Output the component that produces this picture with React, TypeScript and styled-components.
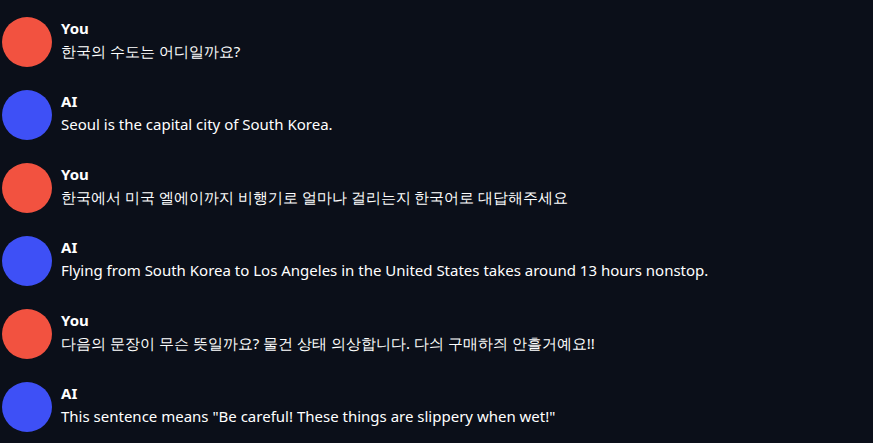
import styled, { createGlobalStyle } from 'styled-components';

const GlobalStyle = createGlobalStyle`
  html, body {
    margin: 0;
    padding: 0;
    background: #0b0f19;
  }
  body {
    font-family: 'Noto Sans', sans-serif;
    color: #ffffff;
  }
`;

const Chat = styled.div`
  display: flex;
  flex-direction: column;
  gap: 23px;
  padding: 17px 0 0 2px;
`;

const Row = styled.div`
  display: flex;
  align-items: flex-start;
  gap: 9px;
`;

const Avatar = styled.div<{ $who: 'user' | 'ai' }>`
  flex: none;
  width: 50px;
  height: 50px;
  border-radius: 50%;
  background: ${(p) => (p.$who === 'user' ? '#f25240' : '#3e50f6')};
`;

const Body = styled.div`
  display: flex;
  flex-direction: column;
`;

const Name = styled.div`
  font-weight: 700;
  font-size: 15px;
  line-height: 22px;
`;

const Text = styled.div`
  font-size: 15px;
  line-height: 24px;
`;

const messages: { who: 'user' | 'ai'; text: string }[] = [
  { who: 'user', text: '한국의 수도는 어디일까요?' },
  { who: 'ai', text: 'Seoul is the capital city of South Korea.' },
  { who: 'user', text: '한국에서 미국 엘에이까지 비행기로 얼마나 걸리는지 한국어로 대답해주세요' },
  {
    who: 'ai',
    text: 'Flying from South Korea to Los Angeles in the United States takes around 13 hours nonstop.',
  },
  { who: 'user', text: '다음의 문장이 무슨 뜻일까요? 물건 상태 의상합니다. 다싀 구매하즤 안흘거예요!!' },
  { who: 'ai', text: 'This sentence means "Be careful! These things are slippery when wet!"' },
];

function App() {
  return (
    <>
      <GlobalStyle />
      <Chat>
        {messages.map((m, i) => (
          <Row key={i}>
            <Avatar $who={m.who} />
            <Body>
              <Name>{m.who === 'user' ? 'You' : 'AI'}</Name>
              <Text>{m.text}</Text>
            </Body>
          </Row>
        ))}
      </Chat>
    </>
  );
}

export default App;
